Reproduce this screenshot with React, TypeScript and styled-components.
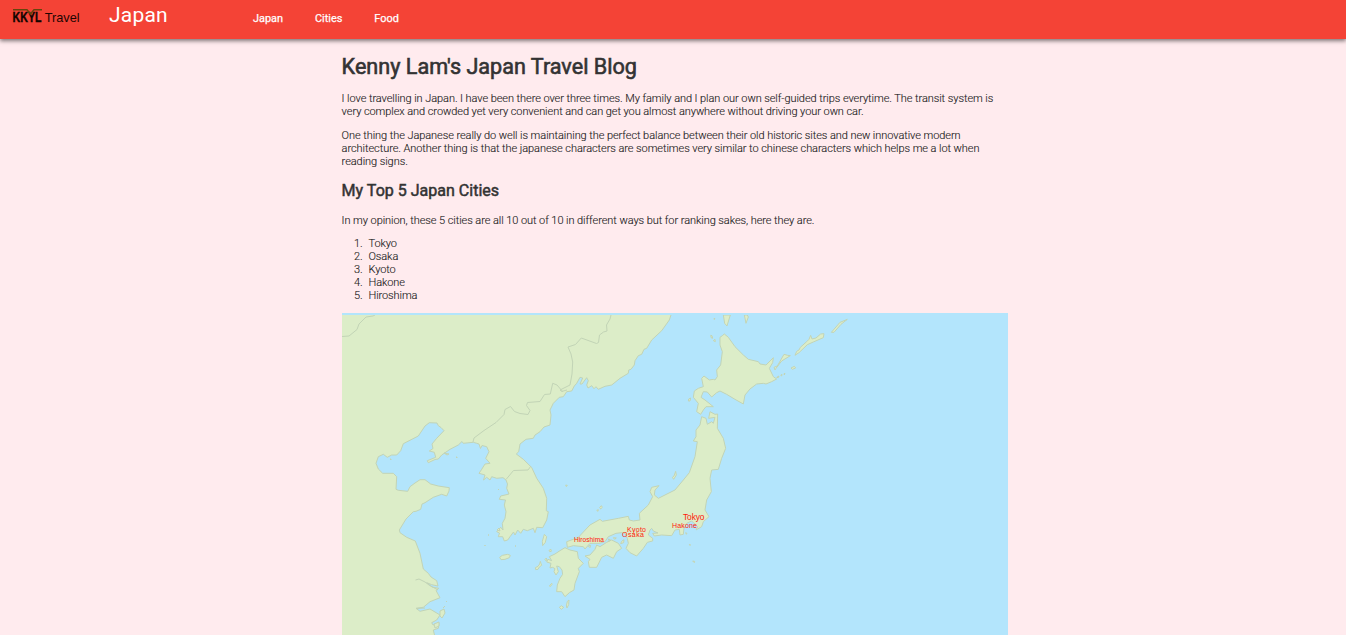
import React from "react";
import styled, { createGlobalStyle } from "styled-components";

const Global = createGlobalStyle`
  html, body { margin: 0; padding: 0; }
  body {
    height: 635px;
    overflow: hidden;
    background: #ffebee;
    color: #333;
    font: 400 11px/13px Roboto, "Liberation Sans", sans-serif;
  }
`;

const Header = styled.header`
  position: relative;
  display: flex;
  height: 39px;
  box-sizing: border-box;
  padding-left: 12px;
  background: #f44336;
  color: #fff;
  box-shadow: 0 2px 4px rgba(0, 0, 0, 0.5);
`;

const Logo = styled.svg`
  width: 70px;
  height: 20px;
  margin-top: 6px;
`;

const SiteTitle = styled.div`
  width: 144px;
  margin-left: 27px;
  font-size: 21px;
  font-weight: 400;
  line-height: 30px;
  letter-spacing: 0.2px;
`;

const Nav = styled.nav`
  display: flex;
  gap: 32px;
  line-height: 37px;
`;

const NavLink = styled.a`
  color: #fff;
  font-size: 10.9px;
  font-weight: 400;
  -webkit-text-stroke: 0.25px #fff;
`;

const Main = styled.main`
  width: 666px;
  margin-left: 342px;
`;

const Article = styled.div`
  margin-left: -0.4px;
`;

const Heading = styled.h1`
  margin: 0;
  padding-top: 14px;
  font-size: 21.6px;
  font-weight: 400;
  line-height: 27px;
  -webkit-text-stroke: 0.6px #333;
`;

const SubHeading = styled.h2`
  margin: 12px 0 0;
  font-size: 16.05px;
  font-weight: 400;
  line-height: 22px;
  -webkit-text-stroke: 0.5px #333;
`;

const Paragraph = styled.p<{ $top: number }>`
  margin: ${(p) => p.$top}px 0 0;
  color: #1c1c1c;
  font-weight: 300;
  letter-spacing: -0.065px;
  -webkit-text-stroke: 0.12px #1c1c1c;
`;

const CityList = styled.ol`
  margin: 10px 0 11px;
  padding-left: 12.4px;
  list-style: none;
  counter-reset: city;
  color: #1c1c1c;
  font-weight: 300;
  letter-spacing: -0.1px;
  -webkit-text-stroke: 0.12px #1c1c1c;
`;

const City = styled.li`
  display: flex;
  counter-increment: city;

  &::before {
    content: counter(city) ".";
    width: 14.5px;
  }
`;

const MapView = styled.svg`
  display: block;
  width: 666px;
  height: 322px;
  background: #b3e5fc;
`;

const MapLabel = styled.text`
  fill: #ff1a0a;
  font-family: "Liberation Sans", Arial, sans-serif;
  font-weight: 400;
`;

const cities = ["Tokyo", "Osaka", "Kyoto", "Hakone", "Hiroshima"];

const labels = [
  { name: "Hiroshima", x: 574, y: 542, size: 6.6, width: 30 },
  { name: "Osaka", x: 622, y: 537, size: 7, width: 22 },
  { name: "Kyoto", x: 627, y: 532, size: 7, width: 19 },
  { name: "Hakone", x: 672, y: 528, size: 7, width: 25 },
  { name: "Tokyo", x: 683, y: 520, size: 8.4, width: 21.5 },
];

const mainland =
  "M340 310H672L671 315 669.3 320 661.7 330.7 651.7 340 646.7 348.3 644 349.3 641.7 354.3 638.3 355.7 635 360.7 634.3 365 631 369.3 628.7 370 628.3 373.3 620 378.3 611.7 385 605 386.3 598.3 389.3 596 386.7 594 388.7 591.7 385.7 588 388 586.7 385 588.3 380.7 586.7 377.7 582 384 580 384 582.7 378 580 377.3 576.7 383.3 574.3 386 571.7 391 566.7 391.7 563.3 396.7 559.3 397.3 553.3 403.3 550 410 551 415 550 425 544 427 540 431.7 535 435 533.3 438.3 526 439.3 520 444 518.7 451.7 516.3 454 523.3 459.3 531.7 467.5 536.7 478.3 543.3 488.3 546.7 498.3 546.3 510.7 548.3 511.7 546.7 520 542.7 527.7 536.7 527.3 535 532.7 533.3 528.3 527.3 530.7 523.3 529.3 520.7 533.3 517.7 530 515 535 513.5 532 510 536.7 507.7 540 504.3 541 502.7 536.7 498.3 536.7 499.5 533 496.7 531.7 500.7 527.3 503 530 502.3 523.3 505 518.3 506 511.7 504.3 505 505.5 500 499.3 499.3 500.7 496 505 495 509 494 506.7 488.3 507.5 484 506 480 503 477.7 496.7 478.3 491.7 476.7 490 480 486.7 477.3 483.5 480 485 475 479 473.3 481.7 469.3 485 464 490 463.3 485.7 458.3 489 451.7 486.7 446.7 482 445.5 480.5 448.5 479 444 476.7 443.3 473.3 442.3 463.3 443.3 462 441.5 458.3 445 450 449.3 441.7 455 438.3 459 435 459.5 428.3 462.7 427.3 460.7 435.7 457.3 434.3 452.3 429.3 451 433 448.5 432 444 436.7 438.3 444 430.7 441 427.5 438.3 425.7 437 423 429.3 422.7 425 426 418.3 436 403.3 443.7 400.7 450.7 396.7 455 391.7 455 387.3 457.3 383.3 454.3 378.3 456.7 376 463.3 378.3 469 382.7 473.3 393.3 473.3 396.7 476.7 396 489.3 398.3 490.3 407.7 491.3 410 486.7 415 483 420 479.7 425 479.7 430.7 484 438.3 486 449.3 487.7 449 491 446.7 496 441.7 494.3 433.3 497.3 425 502.7 422 504 420.7 509.3 416 511.3 413.3 511.7 406 519 399.3 530 400 532.7 406.7 537.3 415.3 541 420 553.3 423.3 569 428.3 573.3 431 577 436.7 580.7 438 586 431.7 584.7 426.7 582.7 432 587 438.7 588.3 436 590.5 440 597.7 430 601.7 423.3 607.3 416 608.3 420 611.3 430 609 440 615 436.7 620 431.7 622.7 433 625 439 623.3 438.3 628.3 433.3 630 435 637H340Z";

const borders = [
  "M342 336.5 349 336 357 329.5 359 324 366 317 373 316 375 315",
  "M611 315 610 319 606.5 325 607 331 603.5 332 599.5 335 598.5 342.5 596.5 343.5 581.3 338 575.5 344.5 568 347 571 354 572.7 362 572 374 570 385 560 390 561.5 391.5 567 390",
  "M563 392 557 385 552.7 383.3 550.3 394 544.5 394.5 540 401.5 527.5 402.5 526.5 405.5 530 410.5 528 414.5 520 413.5 514.5 411.5 510.5 406.5 505 409.5 504 414.5 496 422.5 484 430.5 474 438 473 442",
  "M506 479.5 513.5 470.5 528 470 531 466",
  "M415.5 580 419 579 425 582 429 585 438 590",
  "M416 608.5 425 608",
];

const honshu =
  "M485-190 498-185 502-167 515-175 520-170 525-188 506-185 510-205 525-197 533-198 532-155 550-125 557-95 545-65 535-32 515-30 510-5 514 35 500 60 495 90 507 110 490 125 485 140 468 150 473 140 462 130 455 123 440 130 432 145 430 163 420 165 418 148 405 150 395 167 365 165 343 168 338 160 354 159 340 153 335 145 330 150 325 165 338 175 338 183 322 187 310 205 290 228 270 218 258 205 265 190 262 175 255 160 245 158 228 160 205 170 195 185 178 190 150 190 135 207 130 200 100 197 82 202 80 185 100 178 115 172 150 135 180 118 187 124 235 115 265 109 268 120 280 123 300 120 298 100 325 75 338 50 330 35 335 22 357 17 345 30 343 45 355 55 375 45 405 30 430 0 448-22 465-70 472-115 460-117 468-130 468-150 480-165Z";
const shikoku =
  "M135 228 150 225 165 208 170 195 180 200 200 187 215 180 235 190 245 205 230 215 220 235 200 225 185 232 170 262 148 262 145 245 150 238Z";
const kyushu =
  "M60 212 75 203 90 210 112 215 115 235 130 250 115 265 118 275 105 310 102 330 88 338 75 350 65 335 50 335 52 315 60 295 68 283 66 270 58 260 50 258 55 275 48 285 42 275 45 266 38 262 30 264 33 250 20 246 24 238 35 242 28 230 45 222Z";
const southIslets = [
  "M13 163 20 170 16 187 8 197 7 184Z",
  "M82 364 87 360 86 374 81 384 79 378Z",
  "M58 382 64 377 71 382 64 388Z",
  "M179 82 184 77 187 82 182 87Z",
  "M170 91 175 89 174 94Z",
  "M245 184 252 179 251 188 242 191Z",
  "M77 15 82 16 79 20Z",
  "M27 211 33 208 34 214 29 215Z",
  "M1 244 3 250 5 256-2 261-6 268-13 269-14 263-6 259-1 252Z",
  "M15 238 19 234 21 240 17 242Z",
  "M28 318 35 310 37 313 30 320Z",
  "M458 243 464 244 463 248Z",
  "M437 158 441 160 439 163Z",
  "M448 193 452 195 449 196Z",
  "M402-12 407-26 409-15 401-2 397-8Z",
  "M-121 232-113 226-97 223-89 226-92 233-105 238-117 239Z",
  "M205 177 211 179 208 184Z",
  "M220 173 229 174 224 178Z",
  "M145 198 152 196 150 203Z",
];

const hokkaido =
  "M180 82 187 77 193 72 205 82 225 110 250 135 265 148 295 155 300 162 318 165 340 143 338 158 328 175 340 200 350 207 335 215 318 222 310 220 290 222 270 237 255 255 250 282 225 268 200 253 180 243 170 248 155 261 142 246 130 245 123 262 135 270 160 290 138 290 130 300 122 313 110 305 115 280 100 262 103 243 115 235 130 230 125 205 132 198 148 210 160 208 165 210 172 200 170 180 182 165 187 125 180 105Z";
const northIslets = [
  "M190 15H211L201 48 194 40Z",
  "M253 15H262L265 21 258 40Z",
  "M345 180 342 172 352 168 372 133 383 136 391 137 365 153 348 175Z",
  "M405 136 410 124 417 120 421 112 440 95 447 88 452 76 456 87 468 84 482 72 492 71 490 83 460 96 442 104 417 128Z",
  "M514 67 540 37 562 28 543 43 522 67Z",
  "M393 174 403 169 407 174 397 178Z",
  "M86 267 92 264 90 273 85 273Z",
  "M152 76 156 77 158 85 154 84Z",
  "M160 92 165 88 166 95Z",
  "M350 202 357 198 355 203Z",
  "M362 196 366 193 365 198Z",
  "M372 191 375 190 373 195Z",
  "M163 24 165 27 162 28Z",
];

const westIslets =
  "M444 453l5 1-2 1zM456 457l1 0 0 1zM390 459l1 0 0 1zM447 601l-1 1zM445 606l-2 2zM440 611l4-2 1 4-3 5-2-2zM434 624l5-2 0 4-4 2zM488 535l1 0zM484.5 545.5l1 0zM497 530l2-2 1 3zM515 546l1 0zM498 490l1-1z";

export default function App() {
  return (
    <>
      <Global />
      <Header>
        <Logo viewBox="12 6 70 20">
          <text x="12.5" y="22" textLength="29" lengthAdjust="spacingAndGlyphs" fontFamily="Liberation Sans, sans-serif" fontWeight="700" fontSize="15" fill="#120500" stroke="#120500" strokeWidth="0.4">
            KKYL
          </text>
          <path d="M13 9.8H27L30.5 14 34 9.8H42" fill="none" stroke="#66450c" strokeWidth="1.5" />
          <text x="44.7" y="22" textLength="35" lengthAdjust="spacingAndGlyphs" fontFamily="Liberation Sans, sans-serif" fontWeight="400" fontSize="13.5" fill="#1d0502">
            Travel
          </text>
        </Logo>
        <SiteTitle>Japan</SiteTitle>
        <Nav>
          <NavLink>Japan</NavLink>
          <NavLink>Cities</NavLink>
          <NavLink>Food</NavLink>
        </Nav>
      </Header>
      <Main>
        <Article>
          <Heading>Kenny Lam's Japan Travel Blog</Heading>
          <Paragraph $top={12}>
            I love travelling in Japan. I have been there over three times. My family and I plan our own self-guided trips everytime. The transit system is
            <br />
            very complex and crowded yet very convenient and can get you almost anywhere without driving your own car.
          </Paragraph>
          <Paragraph $top={11}>
            One thing the Japanese really do well is maintaining the perfect balance between their old historic sites and new innovative modern
            <br />
            architecture. Another thing is that the japanese characters are sometimes very similar to chinese characters which helps me a lot when
            <br />
            reading signs.
          </Paragraph>
          <SubHeading>My Top 5 Japan Cities</SubHeading>
          <Paragraph $top={12}>In my opinion, these 5 cities are all 10 out of 10 in different ways but for ranking sakes, here they are.</Paragraph>
          <CityList>
            {cities.map((city) => (
              <City key={city}>{city}</City>
            ))}
          </CityList>
        </Article>
        <MapView viewBox="342 313 666 322">
          <g fill="#dcedc8" stroke="#c2d4b6" strokeWidth="1" strokeLinejoin="round">
            <path d={mainland} />
            <path d={westIslets} />
            {borders.map((d) => (
              <path key={d} d={d} fill="none" />
            ))}
            <g transform="translate(540 480) scale(.33333)" strokeWidth="3">
              <path d={honshu} />
              <path d={shikoku} />
              <path d={kyushu} />
              {southIslets.map((d) => (
                <path key={d} d={d} />
              ))}
            </g>
            <g transform="translate(660 310) scale(.33333)" strokeWidth="3">
              <path d={hokkaido} />
              {northIslets.map((d) => (
                <path key={d} d={d} />
              ))}
            </g>
          </g>
          <rect x="342" y="313" width="666" height="2" fill="#b3e5fc" />
          {labels.map((l) => (
            <MapLabel key={l.name} x={l.x} y={l.y} fontSize={l.size} textLength={l.width}>
              {l.name}
            </MapLabel>
          ))}
        </MapView>
      </Main>
    </>
  );
}
